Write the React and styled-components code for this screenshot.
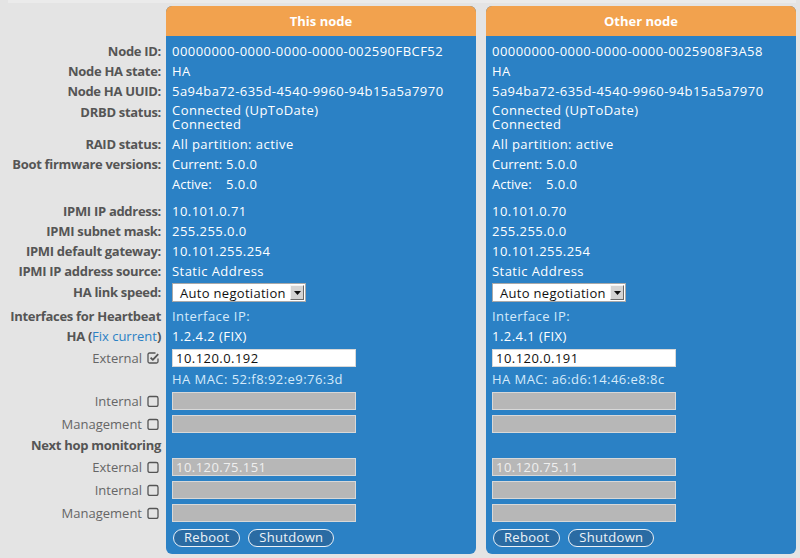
import React from "react";
import styled, { createGlobalStyle } from "styled-components";

const Global = createGlobalStyle`
  html, body { margin: 0; padding: 0; background: #e4e4e4; }
  body { font-family: "Open Sans", "Noto Sans", sans-serif; font-size: 13px; }
`;

const TopEdge = styled.div`
  height: 3px;
  margin-left: 8px;
  margin-right: 4px;
  background: #ebebeb;
`;

const Page = styled.div`
  display: flex;
  align-items: flex-start;
  width: 800px;
  height: 555px;
  overflow: hidden;
`;

const LabelCol = styled.div`
  width: 166px;
  flex: none;
  display: flex;
  flex-direction: column;
  padding-top: 38px;
`;

const Panel = styled.div`
  width: 310px;
  flex: none;
  margin-top: 3px;
  margin-left: ${(p) => (p.$second ? "10px" : "0")};
  display: flex;
  flex-direction: column;
  border-radius: 6px;
  overflow: hidden;
  background: #2b81c5;
`;

const PanelHeader = styled.div`
  height: 30px;
  background: #f2a24e;
  color: #fff;
  font-weight: 700;
  font-size: 13px;
  display: flex;
  align-items: center;
  justify-content: center;
`;

const PanelBody = styled.div`
  display: flex;
  flex-direction: column;
  padding: 5px 0 3px 6px;
  color: #fff;
  letter-spacing: 0.45px;
`;

const LabelRow = styled.div`
  height: ${(p) => p.$h}px;
  display: flex;
  align-items: ${(p) => (p.$top ? "flex-start" : "center")};
  justify-content: flex-end;
  padding-right: ${(p) => (p.$check ? "7px" : "5px")};
  padding-top: ${(p) => (p.$top ? "2px" : "0")};
  box-sizing: border-box;
  gap: 5px;
  color: ${(p) => (p.$plain ? "#666" : "#555")};
  font-weight: ${(p) => (p.$plain ? 400 : 700)};
  letter-spacing: ${(p) => (p.$plain ? "0" : "-0.3px")};
  white-space: nowrap;
`;

const ValueRow = styled.div`
  height: ${(p) => p.$h}px;
  display: flex;
  flex-direction: ${(p) => (p.$stack ? "column" : "row")};
  align-items: ${(p) => (p.$stack ? "flex-start" : p.$top ? "flex-start" : "center")};
  padding-top: ${(p) => (p.$stack || p.$top ? "2px" : "0")};
  box-sizing: border-box;
  gap: ${(p) => (p.$gap ? p.$gap : 0)}px;
  line-height: 14px;
  color: ${(p) => (p.$soft ? "#d5eafa" : "#fff")};
  white-space: nowrap;
`;

const Link = styled.span`
  color: #2b81c5;
  font-weight: 400;
  letter-spacing: 0;
`;

const Key = styled.span`
  display: inline-block;
  flex: none;
  width: 54px;
  letter-spacing: 0;
`;

const SelectBox = styled.div`
  width: 134px;
  height: 19px;
  box-sizing: border-box;
  border: 1px solid #a9a9a9;
  background: #fff;
  display: flex;
  align-items: center;
  color: #111;
  padding-left: 7px;
  letter-spacing: 0.3px;
`;

const SelectText = styled.span`
  flex: 1;
`;

const SelectArrow = styled.span`
  width: 14px;
  height: 15px;
  margin-right: 1px;
  box-sizing: border-box;
  background: #d4d4d4;
  border-top: 1px solid #f4f4f4;
  border-left: 1px solid #f4f4f4;
  border-right: 1px solid #6b6b6b;
  border-bottom: 1px solid #6b6b6b;
  display: flex;
  align-items: center;
  justify-content: center;
`;

const TextInput = styled.div`
  width: 184px;
  height: 18px;
  box-sizing: border-box;
  border: 1px solid #d8d8d8;
  background: ${(p) => (p.$disabled ? "#b7b7b7" : "#fff")};
  color: ${(p) => (p.$disabled ? "#efefef" : "#111")};
  padding-left: 3px;
  display: flex;
  align-items: center;
  font-size: 13px;
`;

const Btn = styled.button`
  font-family: inherit;
  font-size: 13px;
  letter-spacing: 0.3px;
  height: 18px;
  padding: 0 10px;
  border: 1px solid #e9f0f7;
  border-radius: 10px;
  background: #2a6ba3;
  color: #eef3f8;
  display: flex;
  align-items: center;
  line-height: 1;
  margin-left: 1px;
`;

const Box = ({ checked }) => (
  <svg width="12" height="12" viewBox="0 0 12 12" fill="none" stroke="#555" strokeWidth="1.3">
    {checked ? (
      <>
        <path d="M8.5 1H2.5A1.5 1.5 0 0 0 1 2.5v7A1.5 1.5 0 0 0 2.5 11h7A1.5 1.5 0 0 0 11 9.5V6.5" />
        <path d="M3.6 5.6l2.2 2.3 5.4-5.8" strokeWidth="1.8" strokeLinejoin="round" />
      </>
    ) : (
      <rect x="1" y="1.5" width="10" height="10" rx="1.8" />
    )}
  </svg>
);

const Arrow = () => (
  <svg width="7" height="4" viewBox="0 0 7 4">
    <path d="M0 0h7L3.5 4z" fill="#111" />
  </svg>
);

const rows = [
  { key: "id", h: 20, label: "Node ID:" },
  { key: "state", h: 20, label: "Node HA state:" },
  { key: "uuid", h: 20, label: "Node HA UUID:" },
  { key: "drbd", h: 33, label: "DRBD status:", top: true },
  { key: "raid", h: 20, label: "RAID status:" },
  { key: "boot", h: 20, label: "Boot firmware versions:" },
  { key: "active", h: 20, label: "" },
  { key: "sp", h: 7, label: "" },
  { key: "ipmiip", h: 20, label: "IPMI IP address:" },
  { key: "mask", h: 20, label: "IPMI subnet mask:" },
  { key: "gw", h: 20, label: "IPMI default gateway:" },
  { key: "src", h: 20, label: "IPMI IP address source:" },
  { key: "speed", h: 25, label: "HA link speed:", top: true },
  { key: "iface", h: 20, label: "Interfaces for Heartbeat" },
  { key: "fix", h: 20, label: "fix" },
  { key: "ext", h: 23, label: "External", check: true, checked: true },
  { key: "mac", h: 20, label: "" },
  { key: "int", h: 23, label: "Internal", check: true },
  { key: "mgmt", h: 23, label: "Management", check: true },
  { key: "nh", h: 20, label: "Next hop monitoring" },
  { key: "nhext", h: 23, label: "External", check: true },
  { key: "nhint", h: 23, label: "Internal", check: true },
  { key: "nhmgmt", h: 23, label: "Management", check: true },
  { key: "btn", h: 27, label: "" },
];

const nodes = [
  {
    title: "This node",
    id: "00000000-0000-0000-0000-002590FBCF52",
    ip: "10.101.0.71",
    fix: "1.2.4.2 (FIX)",
    ext: "10.120.0.192",
    mac: "52:f8:92:e9:76:3d",
    nh: "10.120.75.151",
  },
  {
    title: "Other node",
    id: "00000000-0000-0000-0000-0025908F3A58",
    ip: "10.101.0.70",
    fix: "1.2.4.1 (FIX)",
    ext: "10.120.0.191",
    mac: "a6:d6:14:46:e8:8c",
    nh: "10.120.75.11",
  },
];

const renderValue = (key, n) => {
  switch (key) {
    case "id": return n.id;
    case "state": return "HA";
    case "uuid": return "5a94ba72-635d-4540-9960-94b15a5a7970";
    case "drbd": return (<><span>Connected (UpToDate)</span><span>Connected</span></>);
    case "raid": return "All partition: active";
    case "boot": return (<><Key>Current:</Key>5.0.0</>);
    case "active": return (<><Key>Active:</Key>5.0.0</>);
    case "ipmiip": return n.ip;
    case "mask": return "255.255.0.0";
    case "gw": return "10.101.255.254";
    case "src": return "Static Address";
    case "speed":
      return (
        <SelectBox>
          <SelectText>Auto negotiation</SelectText>
          <SelectArrow><Arrow /></SelectArrow>
        </SelectBox>
      );
    case "iface": return "Interface IP:";
    case "fix": return n.fix;
    case "ext": return <TextInput>{n.ext}</TextInput>;
    case "mac": return `HA MAC: ${n.mac}`;
    case "int":
    case "mgmt":
    case "nhint":
    case "nhmgmt": return <TextInput $disabled />;
    case "nhext": return <TextInput $disabled>{n.nh}</TextInput>;
    case "btn": return (<><Btn>Reboot</Btn><Btn>Shutdown</Btn></>);
    default: return null;
  }
};

export default function App() {
  return (
    <>
      <Global />
      <TopEdge />
      <Page>
        <LabelCol>
          {rows.map((r) => (
            <LabelRow key={r.key} $h={r.h} $top={r.top} $check={r.check} $plain={r.check}>
              {r.key === "fix" ? (
                <span>HA (<Link>Fix current</Link>)</span>
              ) : (
                r.label && <span>{r.label}</span>
              )}
              {r.check && <Box checked={r.checked} />}
            </LabelRow>
          ))}
        </LabelCol>
        {nodes.map((n, i) => (
          <Panel key={n.title} $second={i === 1}>
            <PanelHeader>{n.title}</PanelHeader>
            <PanelBody>
              {rows.map((r) => (
                <ValueRow
                  key={r.key}
                  $h={r.h}
                  $stack={r.key === "drbd"}
                  $top={r.key === "speed"}
                  $soft={r.key === "iface" || r.key === "mac"}
                  $gap={r.key === "btn" ? 7 : 0}
                >
                  {renderValue(r.key, n)}
                </ValueRow>
              ))}
            </PanelBody>
          </Panel>
        ))}
      </Page>
    </>
  );
}
